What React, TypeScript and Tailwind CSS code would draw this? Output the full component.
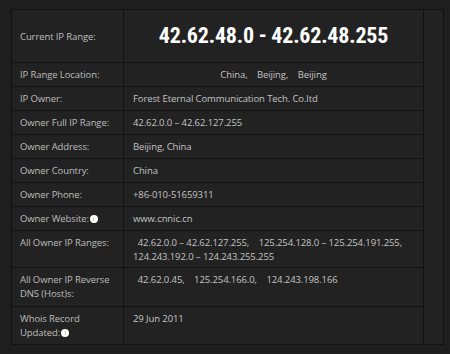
function Info() {
  return (
    <span className="ml-[1px] inline-flex h-[8px] w-[8px] items-center justify-center rounded-full bg-white align-[1px]">
      <span className="h-[4px] w-[1px] bg-[#d8cfa8]" />
    </span>
  );
}

const labelCls =
  "border border-[#121212] px-[8px] pt-[5px] pb-[4px] align-top text-[#bdbdbd]";
const valueCls = "border border-[#121212] px-[9px] pt-[5px] pb-[4px] align-top text-[#c4c4c4]";

export default function App() {
  return (
    <div
      className="min-h-[354px] w-[450px] bg-[#1e1e1e] pl-[11px] pt-[9px]"
      style={{ fontFamily: '"Open Sans", "Liberation Sans", sans-serif' }}
    >
      <table className="w-[432px] table-fixed border-collapse bg-[#222222] text-[9.5px] leading-[14px] tracking-[-0.1px]">
        <colgroup>
          <col className="w-[112px]" />
          <col className="w-[300px]" />
          <col className="w-[20px]" />
        </colgroup>
        <tbody>
          <tr className="h-[53px]">
            <td className={labelCls + " !align-middle"}>Current IP Range:</td>
            <td className="border border-[#121212] text-center align-middle">
              <span
                className="inline-block text-[22px] font-bold leading-[30px] tracking-[-0.2px] text-white"
                style={{ fontFamily: '"Roboto Condensed", "DejaVu Sans Condensed", Roboto, sans-serif' }}
              >
                42.62.48.0 - 42.62.48.255
              </span>
            </td>
            <td rowSpan={11} className="border border-[#121212]" />
          </tr>
          <tr>
            <td className={labelCls}>IP Range Location:</td>
            <td className={valueCls + " text-center"}>
              China,&nbsp;&nbsp;&nbsp;&nbsp;Beijing,&nbsp;&nbsp;&nbsp;&nbsp;Beijing
            </td>
          </tr>
          <tr>
            <td className={labelCls}>IP Owner:</td>
            <td className={valueCls}>Forest Eternal Communication Tech. Co.ltd</td>
          </tr>
          <tr>
            <td className={labelCls}>Owner Full IP Range:</td>
            <td className={valueCls}>42.62.0.0 – 42.62.127.255</td>
          </tr>
          <tr>
            <td className={labelCls}>Owner Address:</td>
            <td className={valueCls}>Beijing, China</td>
          </tr>
          <tr>
            <td className={labelCls}>Owner Country:</td>
            <td className={valueCls}>China</td>
          </tr>
          <tr>
            <td className={labelCls}>Owner Phone:</td>
            <td className={valueCls}>+86-010-51659311</td>
          </tr>
          <tr>
            <td className={labelCls}>
              Owner Website:<Info />
            </td>
            <td className={valueCls}>www.cnnic.cn</td>
          </tr>
          <tr>
            <td className={labelCls + " !pb-[3px]"}>All Owner IP Ranges:</td>
            <td className={valueCls + " !pb-[3px]"}>
              &nbsp;&nbsp;42.62.0.0 – 42.62.127.255,&nbsp;&nbsp;&nbsp; 125.254.128.0 – 125.254.191.255, 124.243.192.0 – 124.243.255.255
            </td>
          </tr>
          <tr>
            <td className={labelCls + " !pb-[5px]"}>
              All Owner IP Reverse
              <br />
              DNS (Host)s:
            </td>
            <td className={valueCls + " !pb-[5px]"}>
              &nbsp;&nbsp;42.62.0.45,&nbsp;&nbsp;&nbsp; 125.254.166.0,&nbsp;&nbsp;&nbsp; 124.243.198.166
            </td>
          </tr>
          <tr>
            <td className={labelCls}>
              Whois Record
              <br />
              Updated:<Info />
            </td>
            <td className={valueCls}>29 Jun 2011</td>
          </tr>
        </tbody>
      </table>
    </div>
  );
}
